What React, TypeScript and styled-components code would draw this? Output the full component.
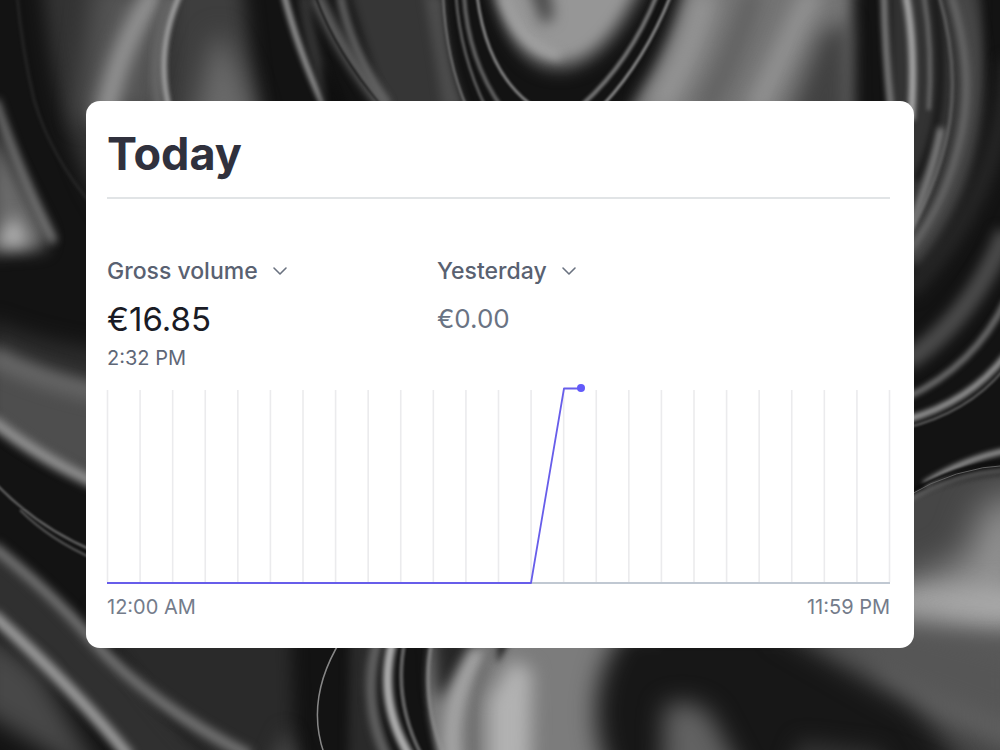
import React from "react";
import styled, { createGlobalStyle } from "styled-components";

const GlobalStyle = createGlobalStyle`
  *, *::before, *::after { box-sizing: border-box; }
  body {
    margin: 0;
    background: #141414;
    font-family: Inter, "Liberation Sans", sans-serif;
  }
`;

const Page = styled.main`
  position: relative;
  isolation: isolate;
  display: flex;
  align-items: center;
  min-height: 100vh;
  padding: 24px 86px 26px;
`;

const Backdrop = styled.svg`
  position: absolute;
  inset: 0;
  z-index: -1;
  width: 100%;
  height: 100%;
`;

const Card = styled.section`
  flex: 1;
  min-width: 0;
  padding: 25px 24px 27px 21px;
  border-radius: 14px;
  background: #ffffff;
`;

const CardHeader = styled.header`
  padding-bottom: 15px;
  border-bottom: 2px solid #e1e4e6;
`;

const Title = styled.h1`
  margin: 0;
  font-size: 45px;
  font-weight: 700;
  line-height: 56px;
  color: #30313d;
`;

const Metrics = styled.div`
  display: grid;
  grid-template-columns: 330px 1fr;
  margin-top: 56px;
`;

const Metric = styled.div`
  display: flex;
  flex-direction: column;
  align-items: flex-start;
`;

const Picker = styled.div`
  display: grid;
  align-items: center;
`;

const PickerSelect = styled.select`
  grid-area: 1 / 1;
  appearance: none;
  margin: 0;
  padding: 0 30px 0 0;
  border: 0;
  background: transparent;
  font-family: inherit;
  font-size: 23px;
  font-weight: 500;
  line-height: 32px;
  color: #596171;
  cursor: pointer;
`;

const PickerArrow = styled.svg`
  grid-area: 1 / 1;
  justify-self: end;
  width: 16px;
  height: 10px;
  pointer-events: none;
`;

const Amount = styled.output<{ $muted?: boolean }>`
  margin-top: 12px;
  font-size: ${(p) => (p.$muted ? 26 : 33)}px;
  line-height: 40px;
  color: ${(p) => (p.$muted ? "#6a7383" : "#1a1b25")};
`;

const Time = styled.time<{ $strong?: boolean }>`
  font-size: 20px;
  line-height: 28px;
  color: ${(p) => (p.$strong ? "#5f6777" : "#747c8b")};
`;

const Chart = styled.svg`
  display: block;
  width: 100%;
  height: auto;
  margin-top: 10px;
  overflow: visible;
`;

const Axis = styled.div`
  display: flex;
  justify-content: space-between;
  margin-top: 9px;
`;

const MetricStack = styled(Metric)`
  gap: 5px;
`;

type Fold = { d: string; c: string; b: number; w?: number };

/* Folds of dark satin, back to front: w = stroke width, none means a filled area; b = softness. */
const folds: Fold[] = [
  // top left
  { d: "M42 -20L110 -20L110 220Q56 150 42 -20Z", c: "#333333", b: 9 },
  { d: "M17 -5Q22 50 34 100Q52 160 95 208", c: "#2c2c2c", b: 1.6, w: 2 },
  { d: "M95 -20L170 -20L165 120L78 120Z", c: "#555555", b: 12 },
  { d: "M158 -12Q118 45 104 122", c: "#969696", b: 8, w: 20 },
  { d: "M172 -20L242 -20L258 120L165 120Z", c: "#3e3e3e", b: 9 },
  { d: "M218 30Q250 80 262 150L190 150Q200 80 218 30Z", c: "#6a6a6a", b: 13 },
  { d: "M172 -5Q148 50 160 110", c: "#6c6c6c", b: 4, w: 10 },
  { d: "M180 -6Q154 52 170 112", c: "#a8a8a8", b: 2, w: 5 },
  { d: "M345 -20L436 -20L450 120L388 120Z", c: "#363636", b: 5 },
  { d: "M284 -6Q297 48 325 108", c: "#9a9a9a", b: 2.4, w: 6 },
  { d: "M303 -5Q310 50 332 105", c: "#404040", b: 4, w: 8 },
  { d: "M316 -5Q340 50 384 106", c: "#606060", b: 4, w: 13 },
  { d: "M322 60Q338 80 350 112L326 112Z", c: "#0e0e0e", b: 4 },
  { d: "M315 -5Q335 52 382 106", c: "#161616", b: 0.8, w: 2 },
  { d: "M340 -5Q350 48 388 106", c: "#646464", b: 3, w: 8 },
  // top centre
  { d: "M424 -5L443 -5Q446 60 466 108L442 108Q434 50 424 -5Z", c: "#4c4c4c", b: 4 },
  { d: "M443 -5Q446 60 467 108", c: "#787878", b: 1.2, w: 2 },
  { d: "M456 -5Q460 55 486 108", c: "#585858", b: 1.3, w: 3 },
  { d: "M464 -5Q468 60 502 108", c: "#646464", b: 1.8, w: 4 },
  { d: "M477 -5Q486 70 530 104", c: "#808080", b: 1.3, w: 3 },
  { d: "M488 -30Q505 76 562 74Q615 70 656 -30Z", c: "#404040", b: 7 },
  { d: "M490 -30Q508 64 562 62Q608 58 644 -30Z", c: "#969696", b: 7 },
  { d: "M503 -5Q520 48 560 56", c: "#a4a4a4", b: 5, w: 8 },
  { d: "M522 -30L546 -30L554 18L542 24Z", c: "#484848", b: 7 },
  { d: "M657 -5Q630 62 583 104", c: "#787878", b: 1.7, w: 4 },
  { d: "M671 -5Q645 60 604 104", c: "#858585", b: 1.3, w: 3 },
  // top right
  { d: "M688 -20L853 -20L851 120L622 120Q668 60 688 -20Z", c: "#747474", b: 7 },
  { d: "M706 -10Q692 55 655 112", c: "#989898", b: 11, w: 26 },
  { d: "M754 -10Q738 50 704 112", c: "#5e5e5e", b: 9, w: 16 },
  { d: "M814 -10Q785 50 755 112", c: "#919191", b: 9, w: 24 },
  { d: "M822 35L848 20L850 130L785 130Z", c: "#424242", b: 10 },
  { d: "M890 -20L980 -20Q992 120 914 260L890 250Z", c: "#333333", b: 5 },
  { d: "M884 -5Q885 50 891 108", c: "#787878", b: 2.6, w: 7 },
  { d: "M906 -5Q916 50 911 120", c: "#ababab", b: 2.4, w: 7 },
  { d: "M924 -5Q933 50 929 110", c: "#707070", b: 2, w: 4 },
  { d: "M934 -5Q944 60 938 110Q932 150 916 180", c: "#181818", b: 3, w: 7 },
  { d: "M960 -10Q986 90 956 180Q940 225 910 262", c: "#484848", b: 6, w: 22 },
  { d: "M939 -5Q958 60 950 120Q942 175 908 236", c: "#606060", b: 1.6, w: 3 },
  { d: "M951 -5Q974 70 962 130Q948 200 910 250", c: "#6e6e6e", b: 3.2, w: 6 },
  // right edge
  { d: "M941 128Q932 178 906 236", c: "#909090", b: 3, w: 6 },
  { d: "M1010 60Q1000 200 908 292", c: "#262626", b: 7, w: 18 },
  { d: "M1006 232Q972 318 906 362", c: "#4a4a4a", b: 6, w: 20 },
  { d: "M1006 300Q975 366 906 398", c: "#707070", b: 2.6, w: 6 },
  { d: "M1006 355Q970 402 906 420", c: "#a0a0a0", b: 2.5, w: 6 },
  { d: "M1006 367Q970 412 906 428", c: "#606060", b: 0.9, w: 2 },
  { d: "M1020 474Q960 470 880 510L760 600L760 790L1020 790Z", c: "#464646", b: 3 },
  { d: "M1030 490L985 505L965 560L890 590L890 638L1030 638Z", c: "#929292", b: 18 },
  { d: "M1030 588L880 594L880 626L1030 622Z", c: "#aaaaaa", b: 12 },
  { d: "M1030 650L880 652L880 690L1030 755Z", c: "#686868", b: 12 },
  { d: "M1010 450Q965 458 924 484", c: "#a4a4a4", b: 2.6, w: 5 },
  { d: "M1010 462Q960 462 906 494", c: "#0e0e0e", b: 0.8, w: 3 },
  { d: "M1010 465Q955 467 906 497", c: "#606060", b: 0.6, w: 1 },
  { d: "M1010 470Q955 472 906 502", c: "#707070", b: 2, w: 3 },
  // left edge
  { d: "M-10 120L48 236L44 250L-10 254Z", c: "#6a6a6a", b: 8 },
  { d: "M-5 100Q22 180 54 242", c: "#888888", b: 4, w: 7 },
  { d: "M-4 246L14 214L30 246Z", c: "#b4b4b4", b: 8 },
  { d: "M-12 320Q50 345 110 350L110 390L-12 360Z", c: "#2c2c2c", b: 10 },
  { d: "M-12 350Q50 382 110 392L110 484Q40 462 -12 416Z", c: "#4e4e4e", b: 7 },
  { d: "M-10 354Q40 380 110 394", c: "#6c6c6c", b: 8, w: 18 },
  { d: "M-8 420Q40 458 98 484", c: "#9c9c9c", b: 5, w: 11 },
  { d: "M-5 483Q38 528 96 552", c: "#707070", b: 1.2, w: 2 },
  { d: "M20 510Q50 540 96 560", c: "#5a5a5a", b: 0.9, w: 2 },
  { d: "M-10 550L20 575L100 652L210 760L130 760L-10 616Z", c: "#303030", b: 5 },
  // bottom left
  { d: "M92 610L290 610L296 790L240 790Q150 715 92 610Z", c: "#2a2a2a", b: 8 },
  { d: "M-8 546Q50 592 92 640Q150 705 250 756", c: "#787878", b: 5, w: 11 },
  { d: "M-20 625L40 672L110 790L-20 710Z", c: "#484848", b: 11 },
  { d: "M-8 614Q80 694 130 758", c: "#a2a2a2", b: 4.5, w: 11 },
  { d: "M286 728L306 780L262 780Z", c: "#444444", b: 9 },
  // bottom centre
  { d: "M341 640Q304 700 325 756", c: "#868686", b: 0.7, w: 1.5 },
  { d: "M350 630L376 630L366 700L388 770L348 770Z", c: "#2a2a2a", b: 5 },
  { d: "M378 640Q360 700 388 760", c: "#626262", b: 3.5, w: 11 },
  { d: "M393 640Q376 702 412 760", c: "#b0b0b0", b: 2.8, w: 9 },
  { d: "M405 640Q392 702 424 760", c: "#606060", b: 1.3, w: 4 },
  { d: "M432 635L660 635L660 790L448 790Q416 700 432 635Z", c: "#7c7c7c", b: 3 },
  { d: "M432 625L490 625L452 685L436 700Z", c: "#262626", b: 8 },
  { d: "M432 640Q420 700 446 760", c: "#8a8a8a", b: 1.8, w: 3 },
  { d: "M480 650Q444 705 454 765", c: "#a4a4a4", b: 6, w: 17 },
  { d: "M498 640Q468 690 476 765", c: "#6c6c6c", b: 5, w: 8 },
  { d: "M512 660L532 670L530 790L488 790L488 700Z", c: "#b2b2b2", b: 9 },
  { d: "M498 634L514 634L497 664Z", c: "#242424", b: 3 },
  // bottom right
  { d: "M625 628L790 628L905 695L980 790L616 790Q572 700 625 628Z", c: "#171717", b: 12 },
  { d: "M775 620L915 620L1030 650L1030 740L900 692Z", c: "#565656", b: 16 },
  { d: "M664 708Q685 694 710 714L750 790L662 790Z", c: "#626262", b: 12 },
  { d: "M800 740L880 750L900 790L780 790Z", c: "#323232", b: 10 },
];

const hours = Array.from({ length: 25 }, (_, i) => (i * 782) / 24 + 0.5);

function Satin() {
  return (
    <Backdrop viewBox="0 0 1000 750" preserveAspectRatio="xMidYMid slice" aria-hidden="true">
      <rect width="1000" height="750" fill="#131313" />
      {folds.map((f, i) => (
        <path
          key={i}
          d={f.d}
          fill={f.w ? "none" : f.c}
          stroke={f.w ? f.c : "none"}
          strokeWidth={f.w}
          style={{ filter: `blur(${f.b}px)` }}
        />
      ))}
    </Backdrop>
  );
}

function Dropdown({ label, value }: { label: string; value: string }) {
  return (
    <Picker>
      <PickerSelect aria-label={label} defaultValue={value}>
        <option>{value}</option>
      </PickerSelect>
      <PickerArrow viewBox="0 0 16 10" aria-hidden="true">
        <path
          d="M2 2L8 8L14 2"
          fill="none"
          stroke="#6a7280"
          strokeWidth="1.6"
          strokeLinecap="round"
          strokeLinejoin="round"
        />
      </PickerArrow>
    </Picker>
  );
}

export default function App() {
  return (
    <>
      <GlobalStyle />
      <Page>
        <Satin />
        <Card>
          <CardHeader>
            <Title>Today</Title>
          </CardHeader>
          <Metrics>
            <MetricStack>
              <Metric>
                <Dropdown label="Metric" value="Gross volume" />
                <Amount>€16.85</Amount>
              </Metric>
              <Time $strong>2:32 PM</Time>
            </MetricStack>
            <Metric>
              <Dropdown label="Compare with" value="Yesterday" />
              <Amount $muted>€0.00</Amount>
            </Metric>
          </Metrics>
          <Chart viewBox="0 0 783 202" role="img" aria-label="Gross volume by hour">
            {hours.map((x) => (
              <line key={x} x1={x} x2={x} y1="8" y2="200" stroke="#ebebed" strokeWidth="1.6" />
            ))}
            <line x1="0" x2="783" y1="201" y2="201" stroke="#c0c8d2" strokeWidth="1.8" />
            <path
              d="M0 201H424L457 6.5H474"
              fill="none"
              stroke="#675dea"
              strokeWidth="1.8"
              strokeLinejoin="round"
            />
            <circle cx="474" cy="6" r="4" fill="#625afa" />
          </Chart>
          <Axis>
            <Time>12:00 AM</Time>
            <Time>11:59 PM</Time>
          </Axis>
        </Card>
      </Page>
    </>
  );
}
